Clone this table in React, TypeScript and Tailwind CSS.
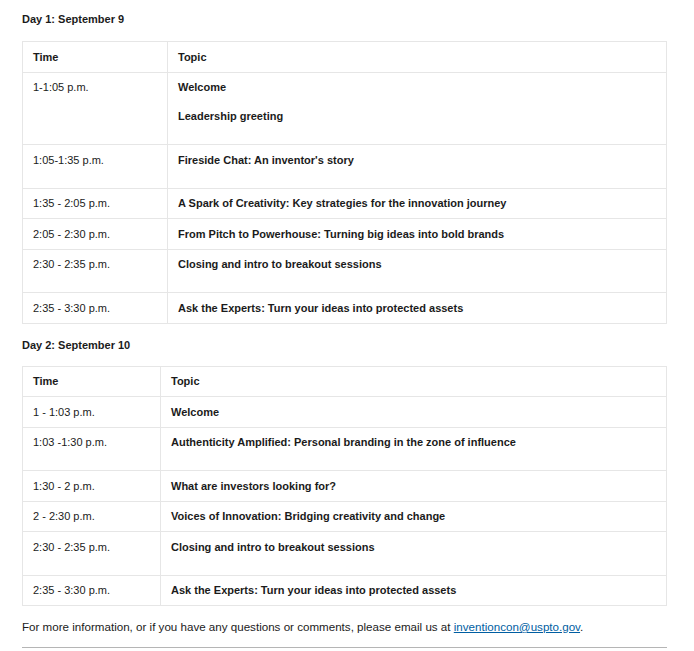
import React from 'react';

type Row = { time: string; topics: string[]; extra?: boolean };

const day1: Row[] = [
  { time: '1-1:05 p.m.', topics: ['Welcome', 'Leadership greeting'], extra: true },
  { time: '1:05-1:35 p.m.', topics: ["Fireside Chat: An inventor's story"], extra: true },
  { time: '1:35 - 2:05 p.m.', topics: ['A Spark of Creativity: Key strategies for the innovation journey'] },
  { time: '2:05 - 2:30 p.m.', topics: ['From Pitch to Powerhouse: Turning big ideas into bold brands'] },
  { time: '2:30 - 2:35 p.m.', topics: ['Closing and intro to breakout sessions'], extra: true },
  { time: '2:35 - 3:30 p.m.', topics: ['Ask the Experts: Turn your ideas into protected assets'] },
];

const day2: Row[] = [
  { time: '1 - 1:03 p.m.', topics: ['Welcome'] },
  { time: '1:03 -1:30 p.m.', topics: ['Authenticity Amplified: Personal branding in the zone of influence'], extra: true },
  { time: '1:30 - 2 p.m.', topics: ['What are investors looking for?'] },
  { time: '2 - 2:30 p.m.', topics: ['Voices of Innovation: Bridging creativity and change'] },
  { time: '2:30 - 2:35 p.m.', topics: ['Closing and intro to breakout sessions'], extra: true },
  { time: '2:35 - 3:30 p.m.', topics: ['Ask the Experts: Turn your ideas into protected assets'] },
];

const cell = 'border border-[#e6e6e6] px-[10px] py-[7.5px] text-left align-top';

const Schedule: React.FC<{ rows: Row[]; timeWidth: string }> = ({ rows, timeWidth }) => (
  <table className="w-[645px] border-collapse text-[11px] leading-[14.5px] text-[#1b1b1b]">
    <thead>
      <tr>
        <th className={`${cell} ${timeWidth} font-bold`}>Time</th>
        <th className={`${cell} font-bold`}>Topic</th>
      </tr>
    </thead>
    <tbody>
      {rows.map((r, i) => (
        <tr key={i}>
          <td className={cell}>{r.time}</td>
          <td className={`${cell} font-bold`}>
            {r.topics.map((t, j) => {
              const last = j === r.topics.length - 1;
              return (
                <p key={j} className={!last ? 'mb-[14.5px]' : r.extra ? 'mb-[13px]' : ''}>
                  {t}
                </p>
              );
            })}
          </td>
        </tr>
      ))}
    </tbody>
  </table>
);

export default function App() {
  return (
    <div
      className="bg-white pl-[22px] pt-[12px] text-[#1b1b1b] w-[694px] h-[651px]"
      style={{ fontFamily: '"Liberation Sans", Arial, sans-serif' }}
    >
      <h3 className="text-[11px] leading-[14px] font-bold mb-[15px]">Day 1: September 9</h3>
      <Schedule rows={day1} timeWidth="w-[145px]" />
      <h3 className="text-[11px] leading-[14px] font-bold mt-[14px] mb-[14px]">Day 2: September 10</h3>
      <Schedule rows={day2} timeWidth="w-[138px]" />
      <p className="text-[11.6px] leading-[14px] mt-[14px]">
        For more information, or if you have any questions or comments, please email us at{' '}
        <a href="#" className="text-[#005ea2] underline">inventioncon@uspto.gov</a>.
      </p>
      <hr className="mt-[13px] border-t border-[#b5b5b5] w-[645px]" />
    </div>
  );
}
